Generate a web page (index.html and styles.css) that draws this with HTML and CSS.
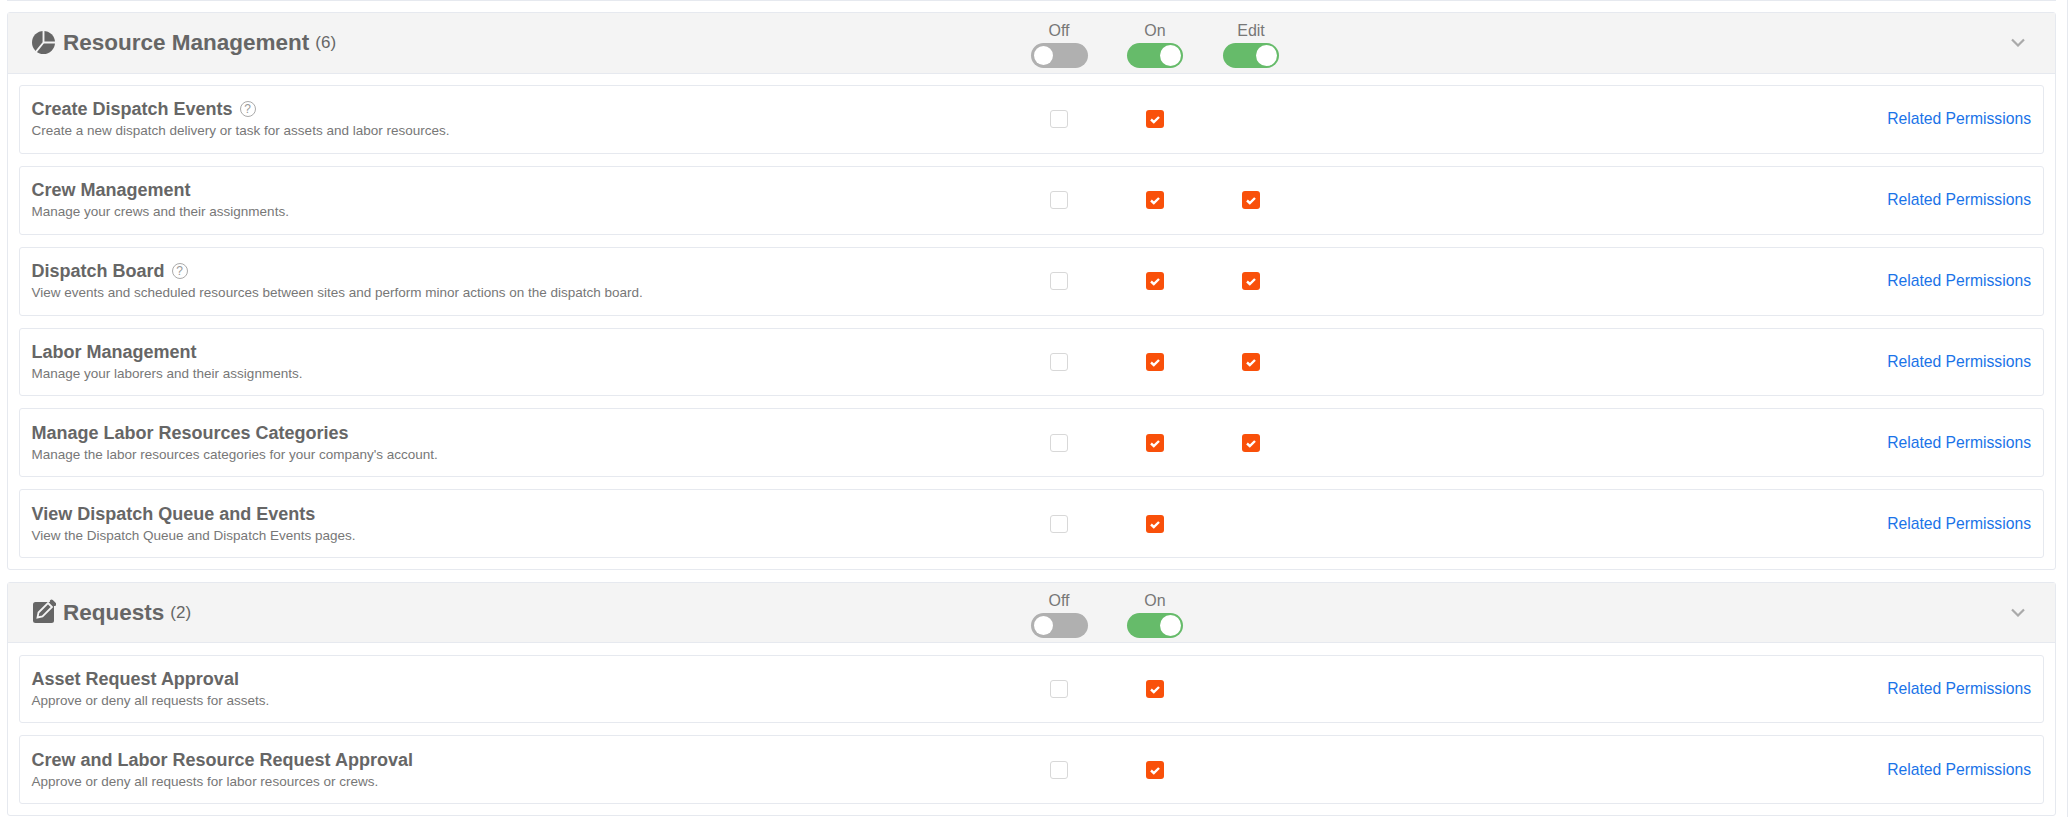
FILE: index.html
```html
<!DOCTYPE html>
<html lang="en">
<head>
    <meta charset="UTF-8">
    <title>Permissions</title>
    <link rel="stylesheet" href="styles.css">
</head>
<body>
    <div class="page">
        <div class="prev-end"></div>

        <div class="section">
            <div class="section-head">
                <div class="head-title">
                    <svg class="head-icon pie" viewBox="0 0 22 22">
                        <circle cx="11" cy="11" r="11" fill="#666"/>
                        <path d="M11 0V11H22M11 11L3 21" fill="none" stroke="#f4f4f4" stroke-width="1.8"/>
                    </svg>
                    <span class="head-name">Resource Management</span>
                    <span class="head-count">(6)</span>
                </div>
                <div class="col head-col"><span class="col-label">Off</span><span class="toggle"></span></div>
                <div class="col head-col"><span class="col-label">On</span><span class="toggle on"></span></div>
                <div class="col head-col"><span class="col-label">Edit</span><span class="toggle on"></span></div>
                <svg class="chevron" viewBox="0 0 14 9"><path d="M1 1.5L7 7.5L13 1.5" fill="none" stroke="#aaa" stroke-width="2.2"/></svg>
            </div>
            <div class="section-body">
                <div class="row">
                    <div class="info">
                        <div class="row-title">Create Dispatch Events <span class="help">?</span></div>
                        <div class="row-desc">Create a new dispatch delivery or task for assets and labor resources.</div>
                    </div>
                    <div class="col"><span class="check"></span></div>
                    <div class="col"><span class="check checked"><svg viewBox="0 0 18 18"><path d="M5 9.5L7.8 12L13 7" /></svg></span></div>
                    <div class="col"></div>
                    <a class="related" href="#">Related Permissions</a>
                </div>
                <div class="row">
                    <div class="info">
                        <div class="row-title">Crew Management</div>
                        <div class="row-desc">Manage your crews and their assignments.</div>
                    </div>
                    <div class="col"><span class="check"></span></div>
                    <div class="col"><span class="check checked"><svg viewBox="0 0 18 18"><path d="M5 9.5L7.8 12L13 7" /></svg></span></div>
                    <div class="col"><span class="check checked"><svg viewBox="0 0 18 18"><path d="M5 9.5L7.8 12L13 7" /></svg></span></div>
                    <a class="related" href="#">Related Permissions</a>
                </div>
                <div class="row">
                    <div class="info">
                        <div class="row-title">Dispatch Board <span class="help">?</span></div>
                        <div class="row-desc">View events and scheduled resources between sites and perform minor actions on the dispatch board.</div>
                    </div>
                    <div class="col"><span class="check"></span></div>
                    <div class="col"><span class="check checked"><svg viewBox="0 0 18 18"><path d="M5 9.5L7.8 12L13 7" /></svg></span></div>
                    <div class="col"><span class="check checked"><svg viewBox="0 0 18 18"><path d="M5 9.5L7.8 12L13 7" /></svg></span></div>
                    <a class="related" href="#">Related Permissions</a>
                </div>
                <div class="row">
                    <div class="info">
                        <div class="row-title">Labor Management</div>
                        <div class="row-desc">Manage your laborers and their assignments.</div>
                    </div>
                    <div class="col"><span class="check"></span></div>
                    <div class="col"><span class="check checked"><svg viewBox="0 0 18 18"><path d="M5 9.5L7.8 12L13 7" /></svg></span></div>
                    <div class="col"><span class="check checked"><svg viewBox="0 0 18 18"><path d="M5 9.5L7.8 12L13 7" /></svg></span></div>
                    <a class="related" href="#">Related Permissions</a>
                </div>
                <div class="row">
                    <div class="info">
                        <div class="row-title">Manage Labor Resources Categories</div>
                        <div class="row-desc">Manage the labor resources categories for your company's account.</div>
                    </div>
                    <div class="col"><span class="check"></span></div>
                    <div class="col"><span class="check checked"><svg viewBox="0 0 18 18"><path d="M5 9.5L7.8 12L13 7" /></svg></span></div>
                    <div class="col"><span class="check checked"><svg viewBox="0 0 18 18"><path d="M5 9.5L7.8 12L13 7" /></svg></span></div>
                    <a class="related" href="#">Related Permissions</a>
                </div>
                <div class="row">
                    <div class="info">
                        <div class="row-title">View Dispatch Queue and Events</div>
                        <div class="row-desc">View the Dispatch Queue and Dispatch Events pages.</div>
                    </div>
                    <div class="col"><span class="check"></span></div>
                    <div class="col"><span class="check checked"><svg viewBox="0 0 18 18"><path d="M5 9.5L7.8 12L13 7" /></svg></span></div>
                    <div class="col"></div>
                    <a class="related" href="#">Related Permissions</a>
                </div>
            </div>
        </div>

        <div class="section">
            <div class="section-head">
                <div class="head-title">
                    <svg class="head-icon pen" viewBox="0 0 24 24">
                        <rect x="1" y="3" width="21" height="21" rx="2.5" fill="#666"/>
                        <path d="M16 4L20 8L10.5 17.5L5.5 18.5L6.5 13.5Z" fill="#666" stroke="#f4f4f4" stroke-width="1.8"/>
                        <path d="M19.6 2.2L22.6 5.2" stroke="#666" stroke-width="3.4" stroke-linecap="round"/>
                    </svg>
                    <span class="head-name">Requests</span>
                    <span class="head-count">(2)</span>
                </div>
                <div class="col head-col"><span class="col-label">Off</span><span class="toggle"></span></div>
                <div class="col head-col"><span class="col-label">On</span><span class="toggle on"></span></div>
                <div class="col head-col"></div>
                <svg class="chevron" viewBox="0 0 14 9"><path d="M1 1.5L7 7.5L13 1.5" fill="none" stroke="#aaa" stroke-width="2.2"/></svg>
            </div>
            <div class="section-body">
                <div class="row">
                    <div class="info">
                        <div class="row-title">Asset Request Approval</div>
                        <div class="row-desc">Approve or deny all requests for assets.</div>
                    </div>
                    <div class="col"><span class="check"></span></div>
                    <div class="col"><span class="check checked"><svg viewBox="0 0 18 18"><path d="M5 9.5L7.8 12L13 7" /></svg></span></div>
                    <div class="col"></div>
                    <a class="related" href="#">Related Permissions</a>
                </div>
                <div class="row">
                    <div class="info">
                        <div class="row-title">Crew and Labor Resource Request Approval</div>
                        <div class="row-desc">Approve or deny all requests for labor resources or crews.</div>
                    </div>
                    <div class="col"><span class="check"></span></div>
                    <div class="col"><span class="check checked"><svg viewBox="0 0 18 18"><path d="M5 9.5L7.8 12L13 7" /></svg></span></div>
                    <div class="col"></div>
                    <a class="related" href="#">Related Permissions</a>
                </div>
            </div>
        </div>
    </div>
</body>
</html>
```

FILE: styles.css
```css
html, body {
    margin: 0;
    height: 100%;
    overflow: hidden;
    background: #fff;
}
body {
    font-family: "Liberation Sans", Arial, sans-serif;
    color: #666;
}
.page {
    width: 2068px;
    height: 817px;
    box-sizing: border-box;
    padding: 0 11px 0 7px;
    border-right: 1px solid #e6e9ef;
}
.prev-end {
    height: 1px;
    background: #e6e9ef;
    margin-bottom: 11.3px;
}
.section {
    border: 1px solid #e6e9ef;
    border-radius: 3px;
    margin-bottom: 11.8px;
}
.section-head {
    display: flex;
    align-items: center;
    height: 60.4px;
    box-sizing: border-box;
    padding-left: 24px;
    background: #f4f4f4;
    border-bottom: 1px solid #e6e9ef;
}
.head-title {
    display: flex;
    align-items: center;
    width: 979px;
}
.head-icon.pie {
    width: 23px;
    height: 23px;
    margin-right: 8px;
}
.head-icon.pen {
    width: 24px;
    height: 24px;
    margin-right: 7px;
    margin-bottom: 3px;
}
.head-name {
    font-size: 22.5px;
    font-weight: bold;
}
.head-count {
    font-size: 17px;
    margin-left: 6px;
}
.col {
    width: 96px;
    flex: none;
    display: flex;
    flex-direction: column;
    align-items: center;
}
.head-col {
    padding-top: 3px;
}
.col-label {
    font-size: 16px;
    line-height: 20px;
    margin-bottom: 2px;
    color: #777;
}
.toggle {
    position: relative;
    width: 57px;
    height: 25px;
    border-radius: 13px;
    background: #b0b0b0;
}
.toggle::after {
    content: "";
    position: absolute;
    left: 3px;
    top: 3px;
    width: 19px;
    height: 19px;
    border-radius: 50%;
    background: #fff;
}
.toggle.on {
    width: 56px;
    background: #66bb6a;
}
.toggle.on::after {
    left: auto;
    right: 2px;
    top: 2px;
    width: 21px;
    height: 21px;
}
.chevron {
    width: 14px;
    height: 9px;
    margin-left: auto;
    margin-right: 30px;
}
.section-body {
    display: flex;
    flex-direction: column;
    gap: 12px;
    padding: 11.3px 11px 11px;
}
.row {
    display: flex;
    align-items: center;
    height: 68.85px;
    box-sizing: border-box;
    padding: 0 12px 0 11.5px;
    border: 1px solid #e6e9ef;
    border-radius: 3px;
}
.info {
    width: 979.5px;
    flex: none;
}
.row-title {
    display: flex;
    align-items: center;
    gap: 7px;
    font-size: 18px;
    font-weight: bold;
    line-height: 22px;
}
.row-desc {
    font-size: 13.5px;
    line-height: 18px;
    margin-top: 2px;
    color: #777;
}
.help {
    width: 14px;
    height: 14px;
    border: 1.5px solid #aaa;
    border-radius: 50%;
    font-size: 12px;
    font-weight: normal;
    line-height: 14px;
    text-align: center;
    color: #999;
}
.check {
    width: 18px;
    height: 18px;
    box-sizing: border-box;
    border: 1px solid #d8d8d8;
    border-radius: 3px;
    background: #fff;
}
.check.checked {
    border: 0;
    background: #f9500a;
}
.check svg {
    display: block;
    width: 18px;
    height: 18px;
    fill: none;
    stroke: #fff;
    stroke-width: 2.4;
}
.related {
    margin-left: auto;
    font-size: 15.7px;
    color: #1a73e8;
    text-decoration: none;
}
```
